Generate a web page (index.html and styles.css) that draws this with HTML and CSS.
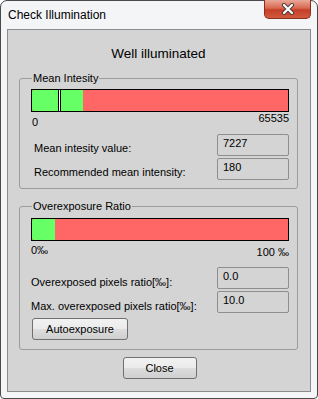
FILE: index.html
```html
<!DOCTYPE html>
<html lang="en">
<head>
  <meta charset="UTF-8" />
  <title>Check Illumination</title>
  <link rel="stylesheet" href="styles.css">
</head>
<body>
  <div class="window">
    <div class="titlebar">
      <span class="title">Check Illumination</span>
      <button class="close-x" aria-label="Close">
        <svg width="18" height="12" viewBox="0 0 18 12">
          <path d="M5 2 L13 10 M13 2 L5 10" stroke="#4a3a3a" stroke-width="4" stroke-linecap="round" fill="none"/>
          <path d="M5 2 L13 10 M13 2 L5 10" stroke="#ffffff" stroke-width="2.2" stroke-linecap="round" fill="none"/>
        </svg>
      </button>
    </div>

    <div class="client">
      <h1 class="status">Well illuminated</h1>

      <fieldset class="group group-mean">
        <legend>Mean Intesity</legend>
        <div class="bar">
          <div class="bar-fill" style="width: 51px"></div>
          <div class="marker" style="left: 26px"></div>
        </div>
        <div class="scale">
          <span class="scale-min">0</span>
          <span class="scale-max">65535</span>
        </div>
        <div class="field first">
          <span class="field-label">Mean intesity value:</span>
          <span class="field-value">7227</span>
        </div>
        <div class="field">
          <span class="field-label">Recommended mean intensity:</span>
          <span class="field-value">180</span>
        </div>
      </fieldset>

      <fieldset class="group group-over">
        <legend>Overexposure Ratio</legend>
        <div class="bar">
          <div class="bar-fill" style="width: 23px"></div>
        </div>
        <div class="scale">
          <span class="scale-min">0‰</span>
          <span class="scale-max">100 ‰</span>
        </div>
        <div class="field first">
          <span class="field-label">Overexposed pixels ratio[‰]:</span>
          <span class="field-value">0.0</span>
        </div>
        <div class="field">
          <span class="field-label">Max. overexposed pixels ratio[‰]:</span>
          <span class="field-value">10.0</span>
        </div>
        <button class="btn btn-auto">Autoexposure</button>
      </fieldset>

      <div class="footer">
        <button class="btn btn-close">Close</button>
      </div>
    </div>
  </div>
</body>
</html>
```

FILE: styles.css
```css
:root {
  --frame: #f4f5f7;
  --client: #d4d4d4;
  --line: #9c9c9c;
  --green: #66ff66;
  --red: #ff6666;
  --text: #000;
}
body {
  margin: 0;
  font-family: 'Liberation Sans', Arial, sans-serif;
  font-size: 11px;
  color: var(--text);
}
.window {
  width: 318px;
  height: 399px;
  box-sizing: border-box;
  background: var(--frame);
  border: 1px solid #4a4a4a;
  border-radius: 7px 7px 4px 4px;
  display: flex;
  flex-direction: column;
}
.titlebar {
  height: 28px;
  display: flex;
  justify-content: space-between;
  align-items: flex-start;
  padding: 0 6px 0 7px;
}
.title {
  font-size: 12px;
  line-height: 15px;
  margin-top: 7px;
}
.close-x {
  width: 47px;
  height: 19px;
  margin-top: -1px;
  padding: 0;
  border: 1px solid #8a2c1e;
  border-top: none;
  border-radius: 0 0 5px 5px;
  background: linear-gradient(#e9a99a, #d8684f 45%, #c53f28 55%, #d2593e);
  display: flex;
  align-items: center;
  justify-content: center;
}
.client {
  height: 363px;
  box-sizing: border-box;
  margin: 0 6px 0 6px;
  background: var(--client);
  border: 1px solid #8c8c8c;
  padding: 0 12px 0 11px;
}
.status {
  margin: 0;
  padding-top: 15px;
  font-size: 13.5px;
  font-weight: normal;
  line-height: 18px;
  text-align: center;
}
.group {
  margin: 9px 0 0;
  padding: 4px 8px 8px 11px;
  border: 1px solid var(--line);
  border-radius: 3px;
}
.group legend {
  padding: 0 1px;
  margin-left: 1px;
  line-height: 13px;
}
.group-over {
  margin-top: 11px;
  padding-top: 5px;
  padding-bottom: 9px;
}
.bar {
  position: relative;
  height: 21px;
  border: 1px solid #000;
  background: var(--red);
}
.bar-fill {
  height: 100%;
  background: var(--green);
  border-radius: 2px 0 0 2px;
}
.marker {
  position: absolute;
  top: 0;
  width: 1px;
  height: 100%;
  background: #fff;
  border-left: 1px solid #000;
  border-right: 1px solid #000;
}
.scale {
  display: flex;
  justify-content: space-between;
  align-items: flex-start;
  height: 18px;
  line-height: 13px;
}
.group-mean .scale-min {
  margin-top: 4px;
  margin-left: 1px;
}
.group-over .scale {
  height: 19px;
  padding-top: 3px;
}
.group-over .scale-max {
  margin-top: 2px;
}
.field {
  display: flex;
  justify-content: space-between;
  align-items: flex-end;
  margin-top: 2px;
}
.field.first {
  margin-top: 4px;
}
.group-mean .field-label {
  padding-left: 3px;
}
.field-label {
  line-height: 13px;
  padding-bottom: 1px;
}
.group-over .field-label {
  padding-bottom: 0;
}
.field-value {
  width: 72px;
  height: 22px;
  box-sizing: border-box;
  border: 1px solid #8e8e8e;
  border-radius: 2px;
  padding: 2px 5px;
  line-height: 13px;
}
.btn {
  font-family: inherit;
  font-size: 11px;
  color: var(--text);
  height: 22px;
  border: 1px solid #707070;
  border-radius: 3px;
  background: linear-gradient(#f2f2f2, #ebebeb 50%, #dddddd 51%, #cfcfcf);
  padding: 0;
}
.btn-auto {
  width: 96px;
  margin-top: 5px;
  margin-left: 1px;
}
.footer {
  display: flex;
  justify-content: center;
  padding-top: 7px;
}
.btn-close {
  width: 74px;
  margin-left: 2px;
}
```
